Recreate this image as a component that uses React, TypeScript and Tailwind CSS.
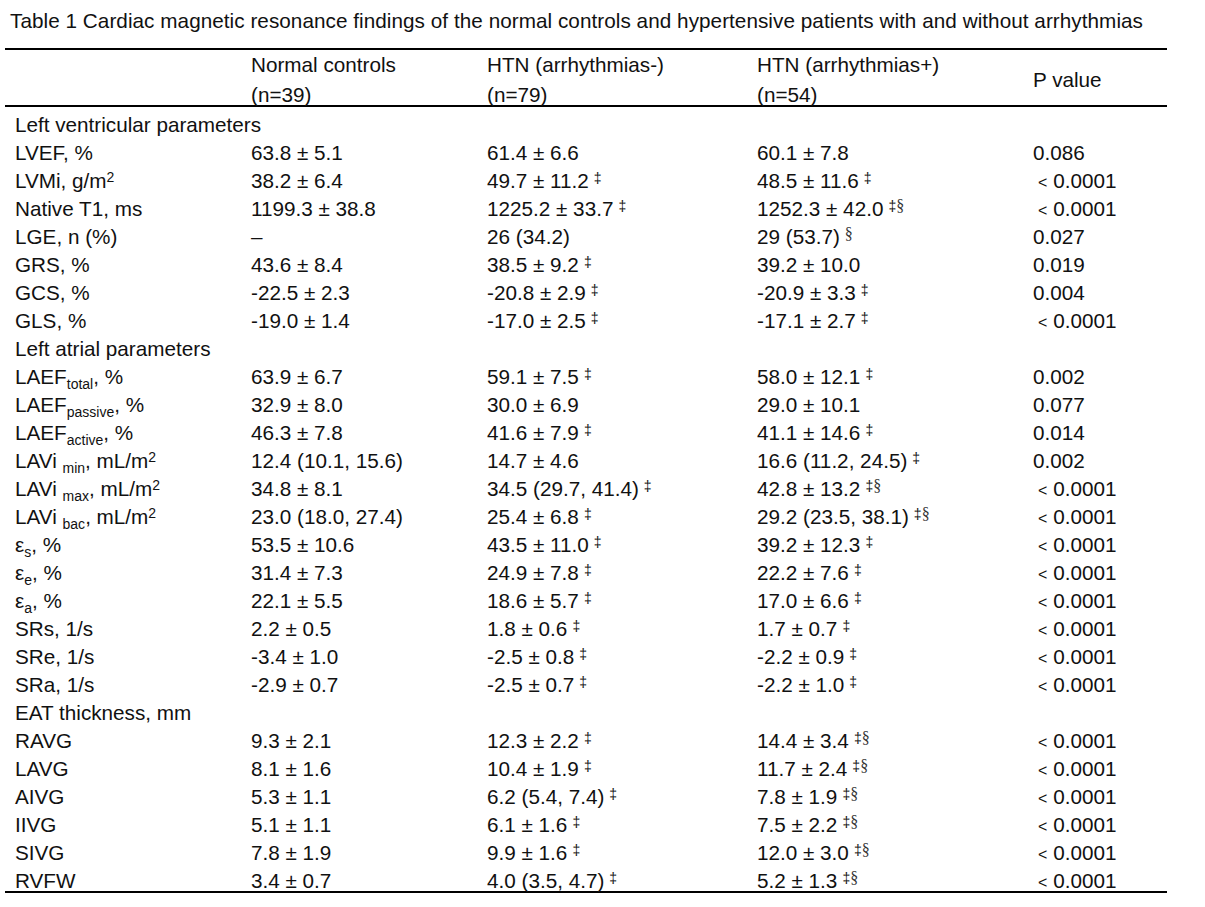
import React from "react";

type Row =
  | { kind: "section"; label: string }
  | { kind: "row"; label: React.ReactNode; c: [string, string, string]; p: string };

const Sub = ({ children }: { children: React.ReactNode }) => (
  <span className="text-[14px] relative top-[5px] leading-none">{children}</span>
);

const Sq = () => <span className="text-[14px] relative -top-[6px] leading-none">2</span>;

function Val({ s }: { s: string }) {
  const [main, marks] = s.split("|");
  return (
    <span>
      {main}
      {marks && (
        <span className="text-[14px] ml-[5px] relative -top-[5px] leading-none">
          {marks.split("").map((m, i) =>
            m === "§" ? (
              <span key={i} className="text-[16px] font-['Liberation_Serif'] text-[#333]">
                §
              </span>
            ) : (
              <span key={i}>{m}</span>
            )
          )}
        </span>
      )}
    </span>
  );
}

function PVal({ s }: { s: string }) {
  if (s.startsWith("<")) {
    return (
      <span className="pl-[5px]">
        <span className="text-[16px]">&lt;</span>
        <span className="ml-[6px]">{s.slice(2)}</span>
      </span>
    );
  }
  return <span>{s}</span>;
}

const rows: Row[] = [
  { kind: "section", label: "Left ventricular parameters" },
  { kind: "row", label: "LVEF, %", c: ["63.8 ± 5.1", "61.4 ± 6.6", "60.1 ± 7.8"], p: "0.086" },
  { kind: "row", label: <>LVMi, g/m<Sq /></>, c: ["38.2 ± 6.4", "49.7 ± 11.2|‡", "48.5 ± 11.6|‡"], p: "< 0.0001" },
  { kind: "row", label: "Native T1, ms", c: ["1199.3 ± 38.8", "1225.2 ± 33.7|‡", "1252.3 ± 42.0|‡§"], p: "< 0.0001" },
  { kind: "row", label: "LGE, n (%)", c: ["–", "26 (34.2)", "29 (53.7)|§"], p: "0.027" },
  { kind: "row", label: "GRS, %", c: ["43.6 ± 8.4", "38.5 ± 9.2|‡", "39.2 ± 10.0"], p: "0.019" },
  { kind: "row", label: "GCS, %", c: ["-22.5 ± 2.3", "-20.8 ± 2.9|‡", "-20.9 ± 3.3|‡"], p: "0.004" },
  { kind: "row", label: "GLS, %", c: ["-19.0 ± 1.4", "-17.0 ± 2.5|‡", "-17.1 ± 2.7|‡"], p: "< 0.0001" },
  { kind: "section", label: "Left atrial parameters" },
  { kind: "row", label: <>LAEF<Sub>total</Sub>, %</>, c: ["63.9 ± 6.7", "59.1 ± 7.5|‡", "58.0 ± 12.1|‡"], p: "0.002" },
  { kind: "row", label: <>LAEF<Sub>passive</Sub>, %</>, c: ["32.9 ± 8.0", "30.0 ± 6.9", "29.0 ± 10.1"], p: "0.077" },
  { kind: "row", label: <>LAEF<Sub>active</Sub>, %</>, c: ["46.3 ± 7.8", "41.6 ± 7.9|‡", "41.1 ± 14.6|‡"], p: "0.014" },
  { kind: "row", label: <>LAVi <Sub>min</Sub>, mL/m<Sq /></>, c: ["12.4 (10.1, 15.6)", "14.7 ± 4.6", "16.6 (11.2, 24.5)|‡"], p: "0.002" },
  { kind: "row", label: <>LAVi <Sub>max</Sub>, mL/m<Sq /></>, c: ["34.8 ± 8.1", "34.5 (29.7, 41.4)|‡", "42.8 ± 13.2|‡§"], p: "< 0.0001" },
  { kind: "row", label: <>LAVi <Sub>bac</Sub>, mL/m<Sq /></>, c: ["23.0 (18.0, 27.4)", "25.4 ± 6.8|‡", "29.2 (23.5, 38.1)|‡§"], p: "< 0.0001" },
  { kind: "row", label: <>ε<Sub>s</Sub>, %</>, c: ["53.5 ± 10.6", "43.5 ± 11.0|‡", "39.2 ± 12.3|‡"], p: "< 0.0001" },
  { kind: "row", label: <>ε<Sub>e</Sub>, %</>, c: ["31.4 ± 7.3", "24.9 ± 7.8|‡", "22.2 ± 7.6|‡"], p: "< 0.0001" },
  { kind: "row", label: <>ε<Sub>a</Sub>, %</>, c: ["22.1 ± 5.5", "18.6 ± 5.7|‡", "17.0 ± 6.6|‡"], p: "< 0.0001" },
  { kind: "row", label: "SRs, 1/s", c: ["2.2 ± 0.5", "1.8 ± 0.6|‡", "1.7 ± 0.7|‡"], p: "< 0.0001" },
  { kind: "row", label: "SRe, 1/s", c: ["-3.4 ± 1.0", "-2.5 ± 0.8|‡", "-2.2 ± 0.9|‡"], p: "< 0.0001" },
  { kind: "row", label: "SRa, 1/s", c: ["-2.9 ± 0.7", "-2.5 ± 0.7|‡", "-2.2 ± 1.0|‡"], p: "< 0.0001" },
  { kind: "section", label: "EAT thickness, mm" },
  { kind: "row", label: "RAVG", c: ["9.3 ± 2.1", "12.3 ± 2.2|‡", "14.4 ± 3.4|‡§"], p: "< 0.0001" },
  { kind: "row", label: "LAVG", c: ["8.1 ± 1.6", "10.4 ± 1.9|‡", "11.7 ± 2.4|‡§"], p: "< 0.0001" },
  { kind: "row", label: "AIVG", c: ["5.3 ± 1.1", "6.2 (5.4, 7.4)|‡", "7.8 ± 1.9|‡§"], p: "< 0.0001" },
  { kind: "row", label: "IIVG", c: ["5.1 ± 1.1", "6.1 ± 1.6|‡", "7.5 ± 2.2|‡§"], p: "< 0.0001" },
  { kind: "row", label: "SIVG", c: ["7.8 ± 1.9", "9.9 ± 1.6|‡", "12.0 ± 3.0|‡§"], p: "< 0.0001" },
  { kind: "row", label: "RVFW", c: ["3.4 ± 0.7", "4.0 (3.5, 4.7)|‡", "5.2 ± 1.3|‡§"], p: "< 0.0001" },
];

const grid = "grid grid-cols-[246px_236px_270px_276px_134px]";

export default function App() {
  return (
    <div className="w-[1205px] h-[907px] bg-white text-[#111] font-['Liberation_Sans',Arial,sans-serif] text-[20.7px] overflow-hidden">
      <div className="pt-[7px] pl-[10px] leading-[28px] whitespace-nowrap tracking-[0.05px]">
        Table 1 Cardiac magnetic resonance findings of the normal controls and hypertensive patients with and without arrhythmias
      </div>
      <div className="ml-[5px] w-[1162px] mt-[13px] border-t-2 border-black">
        <div className={`${grid} h-[57px] leading-[30px] border-b-2 border-black`}>
          <div />
          <div>
            Normal controls
            <br />
            (n=39)
          </div>
          <div>
            HTN (arrhythmias-)
            <br />
            (n=79)
          </div>
          <div>
            HTN (arrhythmias+)
            <br />
            (n=54)
          </div>
          <div className="flex items-center">P value</div>
        </div>
        <div className="pt-[4px] border-b-2 border-black">
          {rows.map((r, i) =>
            r.kind === "section" ? (
              <div key={i} className="h-[28px] leading-[28px] pl-[10px] whitespace-nowrap">
                {r.label}
              </div>
            ) : (
              <div
                key={i}
                className={`${grid} ${i === rows.length - 1 ? "h-[24px]" : "h-[28px]"} leading-[28px] whitespace-nowrap`}
              >
                <div className="pl-[10px]">{r.label}</div>
                <div>
                  <Val s={r.c[0]} />
                </div>
                <div>
                  <Val s={r.c[1]} />
                </div>
                <div>
                  <Val s={r.c[2]} />
                </div>
                <div>
                  <PVal s={r.p} />
                </div>
              </div>
            )
          )}
        </div>
      </div>
    </div>
  );
}
